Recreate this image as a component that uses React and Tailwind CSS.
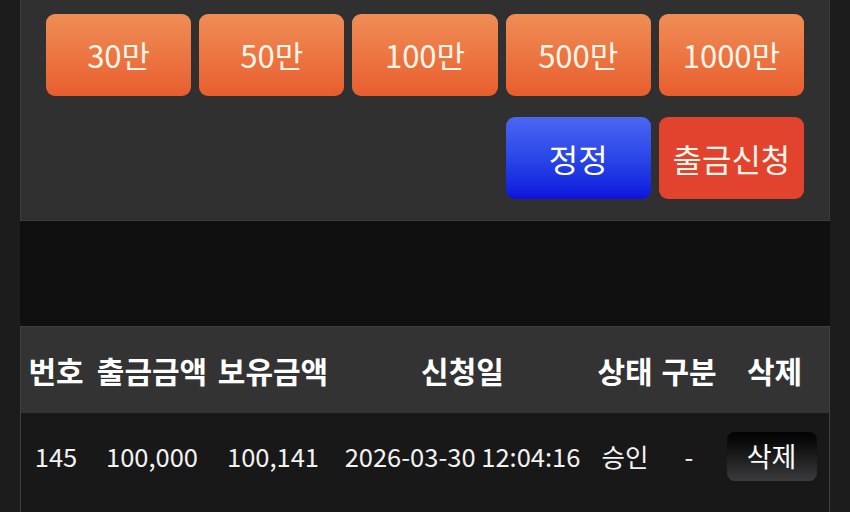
import React from "react";

const amounts = ["30만", "50만", "100만", "500만", "1000만"];

const cols = "grid grid-cols-[70px_122px_120px_259px_66px_62px_1fr] items-center";

const rows = [
  {
    id: 145,
    amount: "100,000",
    balance: "100,141",
    date: "2026-03-30 12:04:16",
    status: "승인",
    kind: "-",
  },
];

export default function App() {
  return (
    <div className="min-h-[512px] bg-[#1c1c1c] font-['Noto_Sans_CJK_KR','Noto_Sans',sans-serif] text-white">
      <div className="mx-auto w-[810px]">
        {/* amount buttons + actions */}
        <div className="border border-t-0 border-[#3e3e3e] bg-[#303030] px-[25px] pb-[21px] pt-[14px]">
          <div className="grid grid-cols-5 gap-[8px]">
            {amounts.map((a) => (
              <button
                key={a}
                className="flex h-[82px] items-center justify-center rounded-[9px] bg-gradient-to-b from-[#ef8d55] to-[#e85d2e] text-[31px] text-[#fff6ea]"
              >
                {a}
              </button>
            ))}
          </div>
          <div className="mt-[21px] grid grid-cols-5 gap-[8px]">
            <button className="col-start-4 flex h-[82px] items-center justify-center rounded-[9px] bg-gradient-to-b from-[#4c66f2] to-[#0f0fdc] text-[32px] text-white">
              정정
            </button>
            <button className="flex h-[82px] items-center justify-center rounded-[9px] bg-[#e1432e] text-[32px] text-[#fff6ea]">
              출금신청
            </button>
          </div>
        </div>

        <div className="h-[105px] bg-[#101011]" />

        {/* history table */}
        <div className="border border-[#3f3f3f] bg-[#181818]">
          <div className={`${cols} h-[86px] bg-[#333333] text-[30px] font-bold`}>
            <div className="text-center">번호</div>
            <div className="text-center">출금금액</div>
            <div className="text-center">보유금액</div>
            <div className="text-center">신청일</div>
            <div className="text-center">상태</div>
            <div className="text-center">구분</div>
            <div className="text-center">삭제</div>
          </div>
          {rows.map((r) => (
            <div key={r.id} className={`${cols} h-[104px] pb-[18px] text-[25.5px] text-[#f2f2f2]`}>
              <div className="text-center">{r.id}</div>
              <div className="text-center">{r.amount}</div>
              <div className="text-center">{r.balance}</div>
              <div className="text-center">{r.date}</div>
              <div className="text-center">{r.status}</div>
              <div className="text-center">{r.kind}</div>
              <div className="flex justify-center">
                <button className="ml-[-6px] h-[49px] w-[90px] rounded-[8px] bg-gradient-to-b from-[#030303] to-[#3c3c3e] text-[27px] text-white">
                  삭제
                </button>
              </div>
            </div>
          ))}
        </div>
      </div>
    </div>
  );
}
